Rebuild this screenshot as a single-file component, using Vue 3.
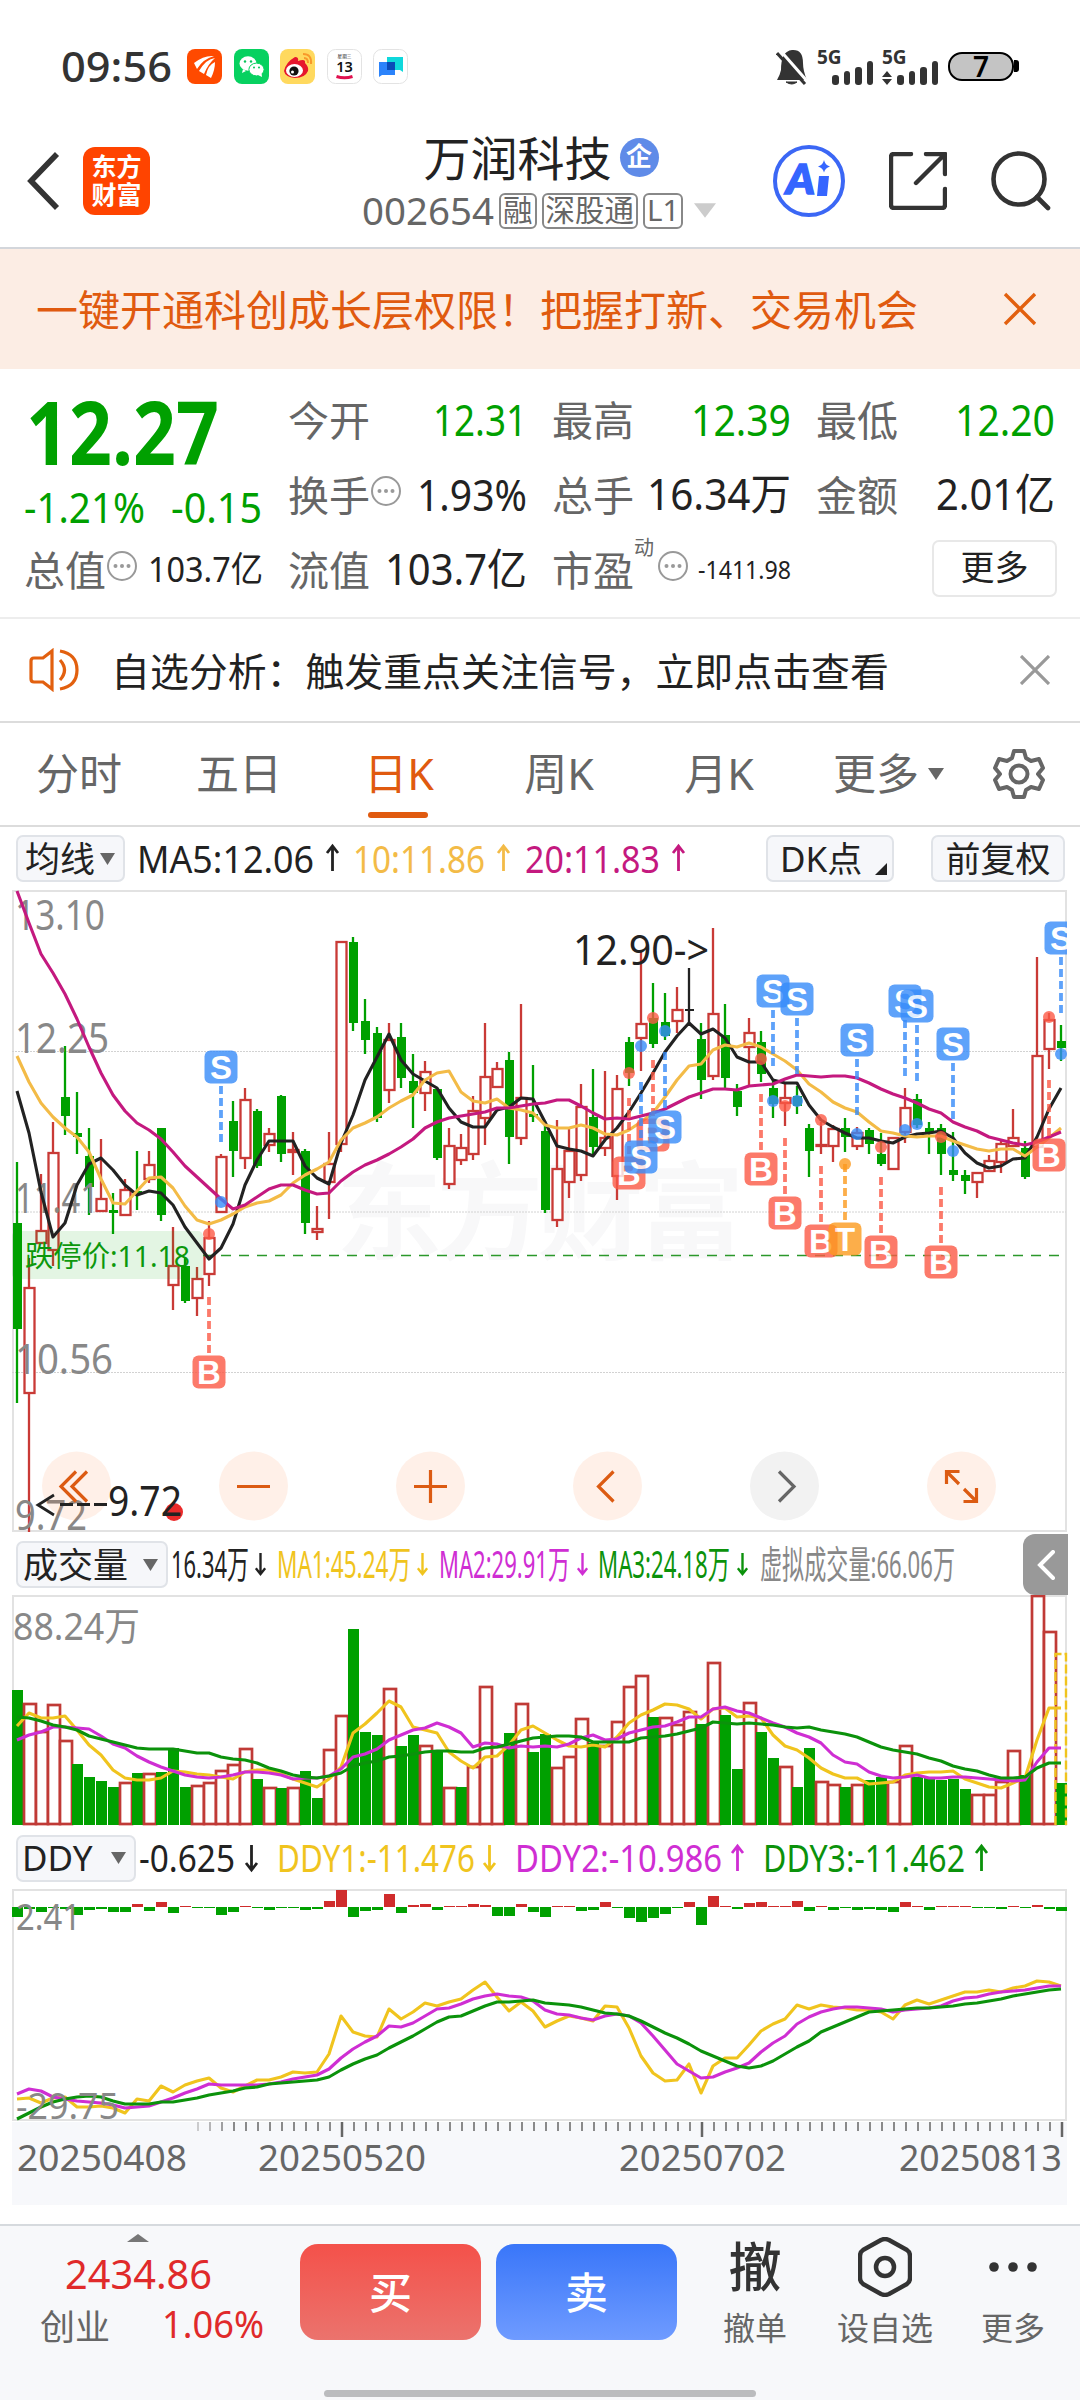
<script setup>

import {h} from "vue"

// Text squeezed or stretched to a known width, centred on its cap height
const Fit = (props) => h("svg", {width: props.w, height: props.s, class: "fit"}, [
    h("text", {
        x: 0,
        y: props.s * 0.86,
        "font-size": props.s,
        textLength: props.w,
        lengthAdjust: "spacingAndGlyphs",
        fill: "currentColor",
    }, props.t),
])
Fit.props = ["t", "w", "s"]

const Arrow = (props) => h("svg", {width: 13, height: 28, viewBox: "0 0 13 28", fill: "none", stroke: "currentColor", "stroke-width": 2.8, class: "fit"}, [
    h("path", {d: props.up ? "M6.5 27V2M1 9l5.5-7L12 9" : "M6.5 1v25M1 19l5.5 7 5.5-7"}),
])
Arrow.props = ["up"]

const tabs = ["分时", "五日", "日K", "周K", "月K"]

const maLegend = [
    {t: "MA5:12.06", w: 177, c: "dark", up: true, gap: 12, ag: 12},
    {t: "10:11.86", w: 132, c: "amber", up: true, gap: 14, ag: 12},
    {t: "20:11.83", w: 135, c: "rose", up: true, gap: 15, ag: 12},
]
const volLegend = [
    {t: "16.34万", w: 78, c: "dark", gap: 3, ag: 6},
    {t: "MA1:45.24万", w: 134, c: "gold", gap: 11, ag: 6},
    {t: "MA2:29.91万", w: 131, c: "violet", gap: 11, ag: 7},
    {t: "MA3:24.18万", w: 132, c: "green2", gap: 10, ag: 7},
    {t: "虚拟成交量:66.06万", w: 195, c: "gray", gap: 12},
]
const ddyLegend = [
    {t: "-0.625", w: 96, c: "dark", gap: 3, ag: 10},
    {t: "DDY1:-11.476", w: 198, c: "gold", gap: 19, ag: 8},
    {t: "DDY2:-10.986", w: 207, c: "violet", up: true, gap: 19, ag: 9},
    {t: "DDY3:-11.462", w: 202, c: "green2", up: true, gap: 19, ag: 10},
]

const px = (i) => 17 + 12 * i
const line = (ys) => ys.map((y, i) => px(i) + "," + y).join(" ")

// [colour, high, body top, body bottom, low]
const candles = [
    ["g", 1162, 1223, 1329, 1403], ["r", 1258, 1287, 1394, 1532], ["r", 1174, 1230, 1244, 1244], ["r", 1122, 1152, 1251, 1266],
    ["g", 1046, 1097, 1116, 1135], ["g", 1092, 1133, 1137, 1154], ["g", 1128, 1156, 1187, 1215], ["r", 1139, 1198, 1212, 1212],
    ["g", 1193, 1210, 1213, 1234], ["r", 1179, 1189, 1216, 1216], ["g", 1151, 1191, 1193, 1210], ["r", 1151, 1164, 1180, 1183],
    ["g", 1128, 1128, 1215, 1221], ["r", 1227, 1265, 1286, 1310], ["g", 1257, 1266, 1301, 1303], ["r", 1267, 1278, 1299, 1316],
    ["r", 1221, 1237, 1275, 1286], ["r", 1154, 1156, 1213, 1213], ["g", 1101, 1121, 1151, 1177], ["r", 1088, 1099, 1159, 1169],
    ["g", 1109, 1111, 1166, 1168], ["r", 1128, 1133, 1146, 1152], ["g", 1095, 1096, 1154, 1162], ["r", 1132, 1149, 1153, 1175],
    ["g", 1149, 1151, 1223, 1234], ["r", 1206, 1228, 1233, 1240], ["r", 1132, 1163, 1183, 1219], ["r", 941, 941, 1145, 1152],
    ["g", 937, 942, 1023, 1031], ["g", 999, 1021, 1040, 1054], ["g", 1027, 1033, 1118, 1122], ["r", 1023, 1039, 1091, 1103],
    ["g", 1023, 1037, 1078, 1088], ["g", 1054, 1081, 1093, 1128], ["r", 1061, 1071, 1094, 1111], ["g", 1089, 1089, 1158, 1160],
    ["r", 1128, 1145, 1185, 1189], ["r", 1134, 1147, 1161, 1165], ["r", 1096, 1110, 1155, 1160], ["r", 1023, 1076, 1119, 1145],
    ["r", 1062, 1068, 1088, 1088], ["g", 1052, 1060, 1137, 1164], ["r", 1004, 1097, 1139, 1145], ["g", 1065, 1114, 1117, 1122],
    ["g", 1121, 1131, 1210, 1213], ["r", 1120, 1168, 1221, 1227], ["r", 1128, 1150, 1183, 1198], ["r", 1084, 1106, 1176, 1181],
    ["g", 1069, 1117, 1147, 1156], ["r", 1071, 1137, 1149, 1156], ["r", 1075, 1088, 1177, 1200], ["g", 1037, 1042, 1073, 1086],
    ["r", 952, 1023, 1039, 1071], ["g", 983, 1018, 1044, 1048], ["g", 993, 1022, 1036, 1040], ["r", 987, 1009, 1022, 1033],
    ["k", 968, 1009, 1011, 1023], ["g", 1023, 1039, 1080, 1099], ["r", 928, 1013, 1077, 1080], ["g", 1004, 1035, 1078, 1088],
    ["g", 1084, 1091, 1107, 1116], ["r", 1018, 1032, 1048, 1087], ["g", 1031, 1042, 1074, 1082], ["g", 1080, 1088, 1104, 1118],
    ["r", 1083, 1097, 1104, 1126], ["g", 1086, 1096, 1106, 1114], ["g", 1124, 1128, 1151, 1177], ["r", 1122, 1144, 1146, 1154],
    ["r", 1125, 1128, 1147, 1162], ["g", 1118, 1128, 1137, 1152], ["r", 1127, 1132, 1147, 1150], ["g", 1128, 1130, 1144, 1154],
    ["g", 1133, 1154, 1164, 1166], ["r", 1137, 1137, 1170, 1170], ["r", 1088, 1107, 1133, 1143], ["g", 1094, 1099, 1125, 1128],
    ["g", 1122, 1128, 1133, 1154], ["g", 1124, 1128, 1154, 1175], ["g", 1132, 1170, 1175, 1181], ["g", 1170, 1175, 1181, 1194],
    ["r", 1172, 1172, 1183, 1198], ["r", 1155, 1160, 1172, 1172], ["r", 1140, 1143, 1163, 1173], ["r", 1109, 1137, 1147, 1147],
    ["g", 1141, 1148, 1177, 1179], ["r", 957, 1055, 1148, 1148], ["r", 1013, 1019, 1050, 1069], ["g", 1025, 1041, 1048, 1061],
]
const strokes = {g: "#00a000", r: "#c93a36", k: "#222"}

const ma5 = [1091, 1133, 1192, 1237, 1223, 1185, 1164, 1158, 1170, 1185, 1195, 1191, 1193, 1205, 1227, 1243, 1259, 1248, 1224, 1185, 1160, 1141, 1141, 1141, 1166, 1178, 1184, 1143, 1115, 1080, 1057, 1034, 1060, 1074, 1081, 1088, 1108, 1122, 1127, 1127, 1110, 1107, 1098, 1099, 1122, 1146, 1149, 1151, 1156, 1140, 1128, 1112, 1093, 1073, 1052, 1036, 1023, 1034, 1029, 1038, 1057, 1062, 1062, 1080, 1083, 1083, 1105, 1120, 1127, 1133, 1138, 1138, 1141, 1143, 1137, 1134, 1133, 1131, 1138, 1153, 1163, 1168, 1166, 1159, 1158, 1137, 1109, 1088]
const ma10 = [1056, 1082, 1103, 1117, 1128, 1137, 1152, 1179, 1203, 1204, 1191, 1178, 1177, 1188, 1206, 1220, 1224, 1220, 1214, 1207, 1203, 1201, 1195, 1183, 1175, 1169, 1162, 1140, 1128, 1123, 1117, 1108, 1101, 1095, 1080, 1073, 1071, 1092, 1101, 1103, 1099, 1108, 1110, 1113, 1125, 1128, 1128, 1125, 1128, 1134, 1135, 1130, 1122, 1113, 1097, 1080, 1066, 1064, 1050, 1045, 1047, 1043, 1047, 1054, 1061, 1070, 1084, 1092, 1102, 1108, 1112, 1122, 1131, 1133, 1136, 1137, 1136, 1136, 1141, 1145, 1149, 1151, 1149, 1149, 1156, 1147, 1138, 1128]
const ma20 = [891, 923, 954, 973, 994, 1019, 1047, 1073, 1095, 1111, 1123, 1130, 1139, 1152, 1166, 1177, 1188, 1199, 1209, 1205, 1197, 1189, 1185, 1185, 1190, 1194, 1193, 1181, 1172, 1165, 1160, 1154, 1147, 1139, 1128, 1122, 1118, 1116, 1114, 1112, 1108, 1108, 1106, 1104, 1103, 1100, 1100, 1106, 1113, 1119, 1118, 1119, 1116, 1113, 1109, 1103, 1097, 1093, 1089, 1089, 1090, 1086, 1085, 1084, 1079, 1075, 1076, 1077, 1076, 1076, 1078, 1083, 1089, 1094, 1098, 1103, 1109, 1113, 1122, 1127, 1131, 1137, 1140, 1143, 1145, 1142, 1137, 1132]

// buy / sell marks: candle, letter, centre y; tail runs down or up from the badge
const marks = [
    {i: 16, l: "B", y: 1372}, {i: 17, l: "S", y: 1067, down: true},
    {i: 51, l: "B", y: 1173}, {i: 53, l: "B", y: 1135}, {i: 52, l: "S", y: 1157}, {i: 54, l: "S", y: 1127},
    {i: 62, l: "B", y: 1169}, {i: 63, l: "S", y: 991, down: true}, {i: 64, l: "B", y: 1213},
    {i: 65, l: "S", y: 999, down: true}, {i: 67, l: "B", y: 1241}, {i: 69, l: "T", y: 1239},
    {i: 70, l: "S", y: 1040, down: true}, {i: 72, l: "B", y: 1252}, {i: 74, l: "S", y: 1001, down: true},
    {i: 75, l: "S", y: 1006, down: true}, {i: 77, l: "B", y: 1262}, {i: 78, l: "S", y: 1044, down: true},
    {i: 86, l: "B", y: 1155}, {i: 87, l: "S", y: 938, down: true},
]
const markColor = {S: "#378cfa", B: "#fc5a46", T: "#fc9a1e"}
const dots = [
    [16, 1234, "B"], [17, 1202, "S"], [51, 1073, "B"], [52, 1046, "S"], [53, 1018, "B"], [54, 1031, "S"], [62, 1059, "B"],
    [63, 1101, "S"], [64, 1106, "B"], [65, 1101, "S"], [67, 1120, "B"], [69, 1164, "T"], [70, 1134, "S"], [72, 1147, "B"],
    [74, 1130, "S"], [75, 1124, "S"], [77, 1137, "B"], [78, 1151, "S"], [86, 1017, "B"], [87, 1054, "S"],
]

const volumes = [1690, 1705, 1733, 1706, 1742, 1764, 1777, 1781, 1787, 1784, 1773, 1775, 1772, 1748, 1787, 1787, 1784, 1772, 1766, 1750, 1779, 1789, 1788, 1789, 1771, 1798, 1751, 1717, 1629, 1732, 1735, 1690, 1746, 1735, 1747, 1751, 1789, 1787, 1768, 1688, 1748, 1733, 1705, 1752, 1734, 1769, 1758, 1720, 1743, 1747, 1723, 1688, 1677, 1717, 1719, 1726, 1713, 1724, 1664, 1715, 1769, 1704, 1732, 1758, 1768, 1787, 1748, 1783, 1786, 1787, 1786, 1780, 1777, 1783, 1747, 1777, 1778, 1780, 1779, 1789, 1796, 1796, 1783, 1752, 1775, 1597, 1633, 1783]
const volColors = "grrrrggggrgrgggrrrrrgrgrggrrgggrggrgrgrrrgrggrrrgrrrrgrrrgrggrggrggrrgrggrrgggggrrrrgrrg"
const vol1 = [1726, 1713, 1718, 1718, 1716, 1730, 1745, 1755, 1770, 1778, 1780, 1780, 1778, 1771, 1772, 1774, 1775, 1777, 1779, 1772, 1770, 1770, 1774, 1779, 1783, 1787, 1779, 1767, 1733, 1724, 1713, 1701, 1707, 1727, 1730, 1733, 1752, 1761, 1768, 1757, 1756, 1745, 1730, 1726, 1733, 1740, 1746, 1747, 1745, 1747, 1737, 1723, 1715, 1710, 1704, 1705, 1709, 1719, 1709, 1708, 1717, 1716, 1718, 1735, 1746, 1750, 1758, 1768, 1774, 1778, 1778, 1784, 1783, 1782, 1775, 1773, 1772, 1772, 1771, 1779, 1783, 1787, 1788, 1783, 1778, 1740, 1708, 1708]
const vol2 = [1740, 1735, 1732, 1727, 1727, 1728, 1729, 1736, 1744, 1748, 1756, 1762, 1767, 1771, 1775, 1777, 1778, 1777, 1775, 1772, 1772, 1773, 1775, 1779, 1778, 1778, 1776, 1769, 1757, 1754, 1749, 1740, 1735, 1730, 1728, 1723, 1727, 1733, 1747, 1743, 1744, 1748, 1746, 1747, 1746, 1747, 1744, 1738, 1735, 1740, 1739, 1733, 1730, 1727, 1726, 1722, 1717, 1717, 1709, 1707, 1711, 1713, 1718, 1723, 1727, 1733, 1737, 1743, 1755, 1762, 1764, 1772, 1776, 1778, 1777, 1775, 1778, 1778, 1777, 1777, 1778, 1779, 1780, 1781, 1780, 1762, 1748, 1748]
const vol3 = [1717, 1718, 1721, 1725, 1727, 1730, 1736, 1739, 1742, 1745, 1748, 1749, 1749, 1749, 1751, 1753, 1753, 1757, 1759, 1760, 1763, 1768, 1771, 1775, 1777, 1778, 1776, 1773, 1766, 1763, 1761, 1757, 1756, 1754, 1752, 1751, 1751, 1752, 1752, 1748, 1747, 1744, 1741, 1738, 1737, 1736, 1736, 1737, 1742, 1742, 1742, 1742, 1738, 1737, 1736, 1734, 1731, 1728, 1722, 1723, 1724, 1723, 1724, 1725, 1727, 1728, 1727, 1730, 1732, 1734, 1737, 1742, 1747, 1750, 1752, 1754, 1758, 1761, 1766, 1769, 1771, 1775, 1778, 1778, 1777, 1768, 1763, 1763]

const ddyBars = [-10, -2, -5, -1, -2, -8, -3, -2, -5, -5, 3, -4, 5, -6, 1, -1, -1, -8, -5, 1, -1, -3, -1, -1, -3, -2, 6, 17, -10, -4, -3, 13, -6, 2, 3, -3, 1, 1, 3, 2, -9, -9, 3, -5, -10, 1, 1, -4, -3, 5, -1, -11, -15, -11, -7, -1, 5, -18, 11, 1, -2, 4, 5, 1, 1, 6, -4, 1, -3, -1, -3, -2, -3, -5, 5, 1, -3, 1, 1, 1, -1, -1, -2, 1, -1, 2, -2, -4]
const ddy1 = [2099, 2098, 2103, 2098, 2097, 2107, 2107, 2106, 2108, 2113, 2099, 2101, 2086, 2092, 2085, 2081, 2078, 2088, 2092, 2086, 2080, 2080, 2077, 2072, 2073, 2072, 2054, 2016, 2032, 2036, 2037, 2009, 2019, 2012, 2003, 2006, 2002, 1999, 1990, 1982, 1997, 2011, 2002, 2011, 2027, 2021, 2016, 2018, 2021, 2006, 2007, 2028, 2056, 2073, 2081, 2080, 2064, 2093, 2066, 2058, 2058, 2045, 2031, 2024, 2019, 2005, 2009, 2005, 2007, 2008, 2010, 2010, 2012, 2019, 2005, 2000, 2004, 2000, 1996, 1992, 1992, 1990, 1992, 1988, 1986, 1981, 1982, 1986]
const ddy2 = [2094, 2089, 2091, 2097, 2099, 2101, 2102, 2103, 2105, 2108, 2107, 2106, 2102, 2098, 2093, 2089, 2084, 2085, 2085, 2085, 2085, 2084, 2082, 2079, 2077, 2075, 2069, 2058, 2049, 2042, 2036, 2026, 2027, 2023, 2016, 2009, 2008, 2004, 1999, 1996, 1994, 1996, 1997, 2001, 2010, 2014, 2015, 2018, 2020, 2016, 2014, 2016, 2023, 2036, 2050, 2064, 2071, 2078, 2077, 2072, 2068, 2063, 2052, 2043, 2036, 2024, 2017, 2012, 2009, 2007, 2007, 2008, 2009, 2012, 2010, 2009, 2008, 2006, 2001, 1998, 1997, 1994, 1992, 1991, 1990, 1988, 1986, 1986]
const ddy3 = [2119, 2113, 2107, 2102, 2099, 2097, 2096, 2097, 2101, 2104, 2104, 2104, 2102, 2102, 2100, 2098, 2095, 2093, 2091, 2088, 2087, 2084, 2083, 2082, 2081, 2080, 2077, 2070, 2064, 2059, 2055, 2048, 2042, 2036, 2029, 2022, 2017, 2016, 2011, 2006, 2002, 2002, 2001, 2000, 2003, 2004, 2005, 2007, 2010, 2013, 2014, 2016, 2021, 2027, 2033, 2038, 2044, 2051, 2056, 2061, 2066, 2068, 2066, 2061, 2054, 2047, 2041, 2032, 2027, 2022, 2017, 2012, 2011, 2010, 2009, 2008, 2008, 2007, 2006, 2004, 2003, 2001, 1999, 1996, 1994, 1992, 1990, 1989]

const scaleLabels = [
    ["13.10", 930, 90], ["12.25", 1053, 94], ["11.41", 1213, 84], ["10.56", 1374, 98], ["9.72", 1530, 72],
]
const dates = [["20250408", 17, 170], ["20250520", 258, 168], ["20250702", 619, 167], ["20250813", 899, 163]]
const ticks = Array.from({length: 73}, (_, k) => k + 15)

const signal = [10, 14, 18, 24]
</script>

<template>
    <div class="page">
        <div class="status">
            <Fit class="clock" t="09:56" :w="111" :s="42" />
            <div class="apps">
                <svg width="35" height="35" viewBox="0 0 35 35"><rect width="35" height="35" rx="8" fill="#ff4a00" /><path d="M7 14Q17 6 27 7Q16 10 10 20zM12 22Q19 10 28 9Q21 15 17 25zM19 26Q21 16 28 13Q28 21 24 29z" fill="#fff" /></svg>
                <svg width="35" height="35" viewBox="0 0 35 35"><rect width="35" height="35" rx="8" fill="#07d160" /><ellipse cx="14" cy="14.500" rx="8.500" ry="7.200" fill="#fff" /><path d="M9 20l-1 4 4-2z" fill="#fff" /><ellipse cx="22.500" cy="20.500" rx="7.600" ry="6.400" fill="#fff" stroke="#07d160" /><path d="M24 26l4 2-.5-4z" fill="#fff" /><g fill="#07c45a"><circle cx="11" cy="12.500" r="1.200" /><circle cx="17" cy="12.500" r="1.200" /><circle cx="20" cy="18.500" r="1" /><circle cx="25" cy="18.500" r="1" /></g></svg>
                <svg width="35" height="35" viewBox="0 0 35 35"><rect width="35" height="35" rx="8" fill="#ffd95e" /><path d="M4 22Q6 13 15 8Q19 8 18 12Q26 9 25 14Q29 18 28 22Q25 29 15 29Q5 28 4 22z" fill="#e6162d" /><ellipse cx="14.500" cy="21.500" rx="8.500" ry="6.500" fill="#fff" /><circle cx="14" cy="22" r="4.600" fill="#111" /><circle cx="12.500" cy="23" r="1.500" fill="#fff" /><path d="M23 5q9 0 8 10M24 9q4 0 4 5" fill="none" stroke="#f8992a" stroke-width="2" /></svg>
                <svg width="35" height="35" viewBox="0 0 35 35"><rect x=".5" y=".5" width="34" height="34" rx="8" fill="#fff" stroke="#e3e3e3" /><text x="17.500" y="8.500" font-size="4.600" text-anchor="middle" fill="#222">星期三</text><text x="17.500" y="23" font-size="14.500" font-weight="600" text-anchor="middle" fill="#111">13</text><path d="M9.500 27.500q8 2.500 16 0" fill="none" stroke="#e0104e" stroke-width="3" /></svg>
                <svg width="35" height="35" viewBox="0 0 35 35"><rect x=".5" y=".5" width="34" height="34" rx="8" fill="#fff" stroke="#e3e3e3" /><path d="M14 8h16v15l-3-2H14z" fill="#0fd8dc" /><path d="M6 13h16v13H9l-3 2z" fill="#2b83fb" /><path d="M14 13h8v8h-8z" fill="#0a4bb8" /></svg>
            </div>
            <div class="system">
                <svg width="32" height="36" viewBox="0 0 32 36"><path d="M1 31q3-5 4-10Q5 2 16 1T27 14q0 8 4 17z" fill="#333" /><path d="M10 33q6 4 11 0z" fill="#333" stroke="#333" /><path d="M3 0l28 32" stroke="#fff" stroke-width="3" /><path d="M1 4l28 31" stroke="#333" stroke-width="3" /></svg>
                <div v-for="n in 2" :key="n" class="cell">
                    <b>5G</b>
                    <svg v-if="n === 2" class="updown" width="10" height="14" viewBox="0 0 10 14"><path d="M5 0l5 6H0zM5 14l5-6H0z" fill="#333" /></svg>
                    <i v-for="s in signal" :key="s" :style="{height: s + 'px'}"></i>
                </div>
                <div class="battery">7</div>
            </div>
        </div>

        <header class="header">
            <div class="left">
                <svg width="34" height="58" viewBox="0 0 34 58"><path d="M31 2L5 29l26 27" fill="none" stroke="#333" stroke-width="5.600" /></svg>
                <div class="brand">东方<br>财富</div>
            </div>
            <div class="title">
                <div class="name">万润科技<span class="corp">企</span></div>
                <div class="code">
                    <Fit t="002654" :w="132" :s="38" />
                    <span class="tag">融</span><span class="tag">深股通</span><span class="tag">L1</span>
                    <svg width="23" height="15" viewBox="0 0 24 15"><path d="M0 0h23L11.500 15z" fill="#ccc" /></svg>
                </div>
            </div>
            <div class="tools">
                <svg width="72" height="72" viewBox="0 0 72 72"><circle cx="36" cy="36" r="34" fill="none" stroke="#3b67f5" stroke-width="4" /><text x="13" y="49" font-size="41" font-weight="900" font-style="italic" fill="#3565ff" stroke="#3565ff" stroke-width="1.500" textLength="29" lengthAdjust="spacingAndGlyphs" class="lato">A</text><path d="M46 31h10l-2 20h-10zM51 15q1 5 6 6.500-5 1.500-6 6-1-4.500-6-6 5-1.500 6-6.500z" fill="#3565ff" /></svg>
                <svg width="58" height="58" viewBox="0 0 58 58" fill="none" stroke="#333" stroke-width="4.400" stroke-linecap="round" stroke-linejoin="round"><path d="M22 2H5q-3 0-3 3v48q0 3 3 3h48q3 0 3-3V37M37 2h19v20M55 3L27 31" /></svg>
                <svg width="60" height="60" viewBox="0 0 60 60" fill="none" stroke="#333" stroke-width="4.600" stroke-linecap="round"><circle cx="28" cy="28" r="25.500" /><path d="M46 46l11 11" /></svg>
            </div>
        </header>

        <div class="banner">
            <span>一键开通科创成长层权限！把握打新、交易机会</span>
            <svg width="34" height="34" viewBox="0 0 34 34"><path d="M2 2l30 30M32 2L2 32" stroke="#e2600f" stroke-width="3.400" /></svg>
        </div>

        <section class="quotes">
            <div class="price">
                <Fit class="green bold last" t="12.27" :w="193" :s="88" />
                <div class="change green"><Fit t="-1.21%" :w="121" :s="41" /><Fit t="-0.15" :w="91" :s="41" /></div>
            </div>
            <div class="quote"><label>今开</label><Fit class="green" t="12.31" :w="94" :s="44" /></div>
            <div class="quote"><label>最高</label><Fit class="green" t="12.39" :w="100" :s="44" /></div>
            <div class="quote"><label>最低</label><Fit class="green" t="12.20" :w="100" :s="44" /></div>
            <div class="quote"><label>换手<svg class="hint" width="30" height="30" viewBox="0 0 30 30"><circle cx="15" cy="15" r="14" fill="none" stroke="#999" stroke-width="2" /><g fill="#999"><circle cx="8.500" cy="15" r="2" /><circle cx="15" cy="15" r="2" /><circle cx="21.500" cy="15" r="2" /></g></svg></label><Fit t="1.93%" :w="110" :s="44" /></div>
            <div class="quote"><label>总手</label><Fit t="16.34万" :w="144" :s="43" /></div>
            <div class="quote"><label>金额</label><Fit t="2.01亿" :w="119" :s="43" /></div>
            <div class="quote"><label>总值<svg class="hint" width="30" height="30" viewBox="0 0 30 30"><circle cx="15" cy="15" r="14" fill="none" stroke="#999" stroke-width="2" /><g fill="#999"><circle cx="8.500" cy="15" r="2" /><circle cx="15" cy="15" r="2" /><circle cx="21.500" cy="15" r="2" /></g></svg></label><Fit t="103.7亿" :w="115" :s="35" /></div>
            <div class="quote"><label>流值</label><Fit t="103.7亿" :w="142" :s="43" /></div>
            <div class="quote pe"><label>市盈<sup>动</sup><svg class="hint" width="30" height="30" viewBox="0 0 30 30"><circle cx="15" cy="15" r="14" fill="none" stroke="#999" stroke-width="2" /><g fill="#999"><circle cx="8.500" cy="15" r="2" /><circle cx="15" cy="15" r="2" /><circle cx="21.500" cy="15" r="2" /></g></svg></label><Fit t="-1411.98" :w="93" :s="26" /></div>
            <div class="quote"><button class="more">更多</button></div>
        </section>

        <div class="notice">
            <svg width="52" height="44" viewBox="0 0 52 44" fill="none" stroke="#e2600f" stroke-width="3.200"><path d="M23 3v38l-9-7H5q-3 0-3-3V13q0-3 3-3h9zM31 12q9 10 0 20M31 3q17 3 17 19T31 41" /></svg>
            <span>自选分析：触发重点关注信号，立即点击查看</span>
            <svg width="30" height="30" viewBox="0 0 30 30"><path d="M1 1l28 28M29 1L1 29" stroke="#999" stroke-width="3.200" /></svg>
        </div>

        <nav class="tabs">
            <a v-for="tab in tabs" :key="tab" :class="{on: tab === '日K'}">{{ tab }}</a>
            <a class="rest">更多<svg width="16" height="12" viewBox="0 0 16 12"><path d="M0 0h16L8 12z" fill="#666" /></svg></a>
            <svg class="gear" width="52" height="52" viewBox="0 0 52 52" fill="none" stroke="#666" stroke-width="4" stroke-linejoin="round"><path d="M21 3h10l2 7 5 3 8-2 4 9-5 6 5 6-4 9-8-2-5 3-2 7H21l-2-7-5-3-8 2-4-9 5-6-5-6 4-9 8 2 5-3z" /><circle cx="26" cy="26" r="8.500" /></svg>
        </nav>

        <div class="legend ma">
            <span class="pill p1">均线<svg width="15" height="12" viewBox="0 0 15 12"><path d="M0 0h15L7.500 12z" fill="#666" /></svg></span>
            <span v-for="m in maLegend" :key="m.t" :class="['entry', m.c]" :style="{marginLeft: m.gap + 'px', gap: m.ag + 'px'}"><Fit :t="m.t" :w="m.w" :s="39" /><Arrow :up="m.up" /></span>
            <span class="pill dk">DK点<svg width="12" height="12" viewBox="0 0 12 12"><path d="M12 0v12H0z" fill="#222" /></svg></span>
            <span class="pill fq">前复权</span>
        </div>

        <svg class="panel" width="1080" height="644" viewBox="0 890 1080 644">
            <path d="M13 890V1531H1066V891H12" fill="none" stroke="#e2e2e2" stroke-width="2" />
            <text x="336" y="1251" font-size="106" font-weight="700" fill="#f8f8f9" textLength="408">东方财富</text>
            <path d="M12 1051.500H1066M12 1212H1066M12 1372.500H1066" stroke="#d2d2d2" stroke-width="1" stroke-dasharray="2 1" />
            <g v-for="(c, i) in candles" :key="i" :stroke="strokes[c[0]]" stroke-width="2.300">
                <path :d="`M${px(i)} ${c[1]}V${c[2]}M${px(i)} ${c[3]}V${c[4]}`" />
                <rect v-if="c[0] === 'r'" :x="px(i) - 4.500" :y="c[2] + 1" width="10" :height="Math.max(c[3] - c[2] - 2, 1)" fill="#fff" />
                <rect v-else :x="px(i) - 4" :y="c[2]" width="9" :height="c[3] - c[2]" :fill="strokes[c[0]]" stroke="none" />
            </g>
            <g fill="#888" font-size="41">
                <text v-for="s in scaleLabels" :key="s[0]" x="15" :y="s[1]" :textLength="s[2]" lengthAdjust="spacingAndGlyphs">{{ s[0] }}</text>
            </g>
            <rect x="12" y="1231" width="191" height="48" rx="5" fill="#00a000" opacity=".11" />
            <text x="25" y="1267" font-size="29" fill="#0c980c" textLength="165" lengthAdjust="spacingAndGlyphs">跌停价:11.18</text>
            <path d="M203 1255.500H1066" stroke="#2b982b" stroke-width="1.300" stroke-dasharray="10 8" />
            <g fill="none" stroke-width="3.100" stroke-linejoin="round">
                <polyline :points="line(ma5)" stroke="#222" />
                <polyline :points="line(ma10)" stroke="#f3bb47" />
                <polyline :points="line(ma20)" stroke="#c4197f" />
            </g>
            <circle v-for="d in dots" :key="d[0]" :cx="px(d[0])" :cy="d[1]" r="6" :fill="markColor[d[2]]" opacity=".8" />
            <g v-for="m in marks" :key="m.i" opacity=".8">
                <path :d="m.down ? `M${px(m.i)} ${m.y + 19}v56` : `M${px(m.i)} ${m.y - 75}v56`" :stroke="markColor[m.l]" stroke-width="3.800" stroke-dasharray="8 4" />
                <rect :x="px(m.i) - 16.500" :y="m.y - 16.500" width="33" height="33" rx="6" :fill="markColor[m.l]" />
                <text :x="px(m.i)" :y="m.y + 12" font-size="33" class="mark" text-anchor="middle" fill="#fff">{{ m.l }}</text>
            </g>
            <rect x="1067" y="900" width="13" height="300" fill="#fff" />
            <text x="573" y="965" font-size="41" fill="#222" textLength="136" lengthAdjust="spacingAndGlyphs">12.90-&gt;</text>
            <circle cx="174" cy="1512" r="9" fill="#eb2a2a" />
            <g fill="#ff6a1f" fill-opacity=".1"><circle cx="76.500" cy="1486" r="34.500" /><circle cx="253.500" cy="1486" r="34.500" /><circle cx="430.500" cy="1486" r="34.500" /><circle cx="607.500" cy="1486" r="34.500" /><circle cx="961.500" cy="1486" r="34.500" /></g>
            <circle cx="784.500" cy="1486" r="34.500" fill="#f2f2f2" />
            <g fill="none" stroke="#dc5b12" stroke-width="3.200">
                <path d="M76 1471.500l-15 15 15 15M87 1471.500l-15 15 15 15M237 1486.500h33M414 1486.500h33M430.500 1470v33M613.500 1471.500l-15 15 15 15" />
                <path d="M946.500 1484v-12.500h13M947 1472l12 12M976.500 1488v13.500h-13M976 1501l-12-12" />
                <path d="M779 1471.500l15 15-15 15" stroke="#666" />
            </g>
            <path d="M54 1495l-16 10 16 10M60 1504.500h13M77 1504.500h13M94 1504.500h13" fill="none" stroke="#222" stroke-width="2.800" />
            <text x="108" y="1516" font-size="41" fill="#222" textLength="74" lengthAdjust="spacingAndGlyphs">9.72</text>
        </svg>

        <div class="legend vol">
            <span class="pill p2">成交量<svg width="15" height="12" viewBox="0 0 15 12"><path d="M0 0h15L7.500 12z" fill="#666" /></svg></span>
            <span v-for="m in volLegend" :key="m.t" :class="['entry', m.c]" :style="{marginLeft: m.gap + 'px', gap: m.ag + 'px'}"><Fit :t="m.t" :w="m.w" :s="38" /><Arrow v-if="m.ag" :up="m.up" class="slim" /></span>
            <span class="drawer"><svg width="18" height="30" viewBox="0 0 18 30"><path d="M16 2L3 15l13 13" fill="none" stroke="#fff" stroke-width="4" stroke-linecap="round" /></svg></span>
        </div>

        <svg class="panel" width="1080" height="232" viewBox="0 1595 1080 232">
            <path d="M13 1596V1825M12 1596H1066V1826" fill="none" stroke="#e2e2e2" stroke-width="2" />
            <text x="13" y="1640" font-size="39" fill="#888" textLength="127" lengthAdjust="spacingAndGlyphs">88.24万</text>
            <template v-for="(y, i) in volumes" :key="i">
                <rect v-if="volColors[i] === 'r'" :x="px(i) - 5" :y="y - 1" width="12" :height="1825 - y" fill="#fff" stroke="#c03a36" stroke-width="2.700" />
                <rect v-else :x="px(i) - 5" :y="y" width="11" :height="1825 - y" fill="#00a000" />
            </template>
            <path d="M1055.500 1825V1654H1066V1825" fill="none" stroke="#f0c41e" stroke-width="2.400" stroke-dasharray="9 3" />
            <g fill="none" stroke-width="3.100" stroke-linejoin="round">
                <polyline :points="line(vol1)" stroke="#f0c41e" />
                <polyline :points="line(vol2)" stroke="#cf2ed3" />
                <polyline :points="line(vol3)" stroke="#0b920b" />
            </g>
        </svg>

        <div class="legend ddy">
            <span class="pill p3">DDY<svg width="15" height="12" viewBox="0 0 15 12"><path d="M0 0h15L7.500 12z" fill="#666" /></svg></span>
            <span v-for="m in ddyLegend" :key="m.t" :class="['entry', m.c]" :style="{marginLeft: m.gap + 'px', gap: m.ag + 'px'}"><Fit :t="m.t" :w="m.w" :s="39" /><Arrow :up="m.up" /></span>
        </div>

        <svg class="panel" width="1080" height="316" viewBox="0 1889 1080 316">
            <rect x="12" y="2122" width="1055" height="83" fill="#f7f8fb" />
            <path d="M12 1890H1066V2120H13V1890" fill="none" stroke="#e2e2e2" stroke-width="2" />
            <rect v-for="(b, i) in ddyBars" :key="i" :x="px(i) - 5" :y="b > 0 ? 1907 - b : 1907" width="11" :height="Math.abs(b)" :fill="b > 0 ? '#d02c2c' : '#00a000'" />
            <g fill="none" stroke-width="3.100" stroke-linejoin="round">
                <polyline :points="line(ddy1)" stroke="#f0c41e" />
                <polyline :points="line(ddy2)" stroke="#cf2ed3" />
                <polyline :points="line(ddy3)" stroke="#0b920b" />
            </g>
            <text x="16" y="1930" font-size="37" fill="#888" textLength="65" lengthAdjust="spacingAndGlyphs">2.41</text>
            <text x="16" y="2119" font-size="37" fill="#888" textLength="103" lengthAdjust="spacingAndGlyphs">-29.75</text>
            <path v-for="i in ticks" :key="i" :d="`M${px(i) + 1} 2122V${i % 30 === 27 ? 2137 : 2131}`" stroke="#666" :stroke-width="i % 30 === 27 ? 2.500 : 1.500" :opacity="i < 18 ? (i - 13) / 5 : 1" />
            <g fill="#666" font-size="37">
                <text v-for="d in dates" :key="d[0]" :x="d[1]" y="2171" :textLength="d[2]" lengthAdjust="spacingAndGlyphs">{{ d[0] }}</text>
            </g>
        </svg>

        <footer class="footer">
            <div class="index">
                <svg width="22" height="8" viewBox="0 0 22 8"><path d="M11 0l11 8H0z" fill="#777" /></svg>
                <Fit class="red" t="2434.86" :w="147" :s="40" />
                <div class="board"><span>创业</span><Fit class="red" t="1.06%" :w="102" :s="38" /></div>
            </div>
            <button class="trade buy">买</button>
            <button class="trade sell">卖</button>
            <div class="action a1"><div class="icon"><b>撤</b></div>撤单</div>
            <div class="action a2"><div class="icon"><svg width="54" height="60" viewBox="0 0 54 60" fill="none" stroke="#333" stroke-width="4.400" stroke-linejoin="round"><path d="M23 3q4-2 8 0l18 10q3 2 3 6v22q0 4-3 6L31 57q-4 2-8 0L5 47q-3-2-3-6V19q0-4 3-6z" /><circle cx="27" cy="30" r="9" stroke-width="4.500" /></svg></div>设自选</div>
            <div class="action a3"><div class="icon"><svg width="48" height="10" viewBox="0 0 48 10" fill="#333"><circle cx="5" cy="5" r="4.800" /><circle cx="24" cy="5" r="4.800" /><circle cx="43" cy="5" r="4.800" /></svg></div>更多</div>
        </footer>
        <div class="home"><i></i></div>
    </div>
</template>

<style>
body {
    background: #fff;
}
</style>

<style scoped>

.page {
    width: 1080px;
    height: 2400px;
    display: flex;
    flex-direction: column;
    overflow: hidden;
    background: #fff;
    color: #222;
    font-family: "Noto Sans", "Noto Sans CJK SC", sans-serif;
}

.page > * {
    flex: none;
    box-sizing: border-box;
}

svg {
    display: block;
    flex: none;
}

.fit {
    overflow: visible;
}

.bold {
    font-weight: 700;
}

.green { color: #00a000; }
.green2 { color: #0b920b; }
.red { color: #e02a2a; }
.dark { color: #222; }
.amber { color: #f3bb47; }
.gold { color: #f0c41e; }
.rose { color: #c4197f; }
.violet { color: #cf2ed3; }
.gray { color: #888; }

.status {
    height: 115px;
    padding: 18px 62px 0 61px;
    display: flex;
    align-items: center;
    color: #333;
}

.clock {
    font-weight: 500;
}

.apps {
    display: flex;
    gap: 11.5px;
    margin-left: 15px;
}

.system {
    margin-left: auto;
    display: flex;
    align-items: center;
}

.cell {
    position: relative;
    height: 36px;
    width: 56px;
    margin-left: 9px;
    display: flex;
    align-items: flex-end;
    justify-content: flex-end;
    gap: 5px;
}

.cell i {
    width: 6.5px;
    border-radius: 3px;
    background: #333;
}

.cell b {
    position: absolute;
    left: 0;
    top: 0;
    font-size: 19px;
    line-height: 16px;
}

.battery {
    position: relative;
    box-sizing: border-box;
    width: 66px;
    height: 29px;
    margin: 0 4px 0 10px;
    border: 2.5px solid #000;
    border-radius: 14px;
    background: #c4c4c4;
    color: #000;
    font: 600 28px/24px "Noto Sans", sans-serif;
    text-align: center;
}

.battery::after {
    content: "";
    position: absolute;
    right: -7px;
    top: 6px;
    width: 5px;
    height: 12px;
    border-radius: 0 3px 3px 0;
    background: #000;
}

.header {
    height: 134px;
    border-bottom: 2px solid #d3d6db;
    display: grid;
    grid-template-columns: 362px 354px 1fr;
    align-items: center;
}

.left {
    display: flex;
    align-items: center;
    padding-left: 26px;
}

.brand {
    width: 67px;
    height: 68px;
    margin-left: 23px;
    box-sizing: border-box;
    padding-top: 5px;
    border-radius: 12px;
    background: #ff4400;
    color: #fff;
    font-weight: 700;
    font-size: 25px;
    line-height: 28px;
    text-align: center;
}

.name {
    display: flex;
    align-items: center;
    justify-content: center;
    font-size: 47px;
    line-height: 56px;
    padding-left: 4px;
}

.corp {
    width: 39px;
    height: 39px;
    margin-left: 8px;
    border-radius: 50%;
    background: #5f8be8;
    color: #fff;
    font-size: 26px;
    font-weight: 700;
    line-height: 37px;
    text-align: center;
}

.code {
    display: flex;
    align-items: center;
    height: 44px;
    margin-top: 3px;
    color: #666;
    white-space: nowrap;
}

.tag {
    margin-left: 5px;
    padding: 0 2px;
    border: 2px solid #888;
    border-radius: 6px;
    font-size: 29.5px;
    line-height: 30px;
    height: 32px;
    flex: none;
}

.code svg:last-child {
    margin-left: 11px;
}

.tools {
    display: flex;
    align-items: center;
    padding-left: 57px;
    gap: 44px;
}

.lato {
    font-family: Lato, sans-serif;
}

.banner {
    height: 120px;
    padding: 0 43px 0 36px;
    display: flex;
    align-items: center;
    justify-content: space-between;
    background: #fcede4;
    color: #e05a0f;
    font-size: 42px;
}

.banner span {
    padding-bottom: 3px;
}

.quotes {
    height: 250px;
    padding: 13px 26px 0;
    border-bottom: 2px solid #ededed;
    display: grid;
    grid-template-columns: repeat(4, 236px);
    grid-template-rows: repeat(3, 75px);
    column-gap: 28px;
}

.price {
    grid-row: span 2;
}

.last {
    margin: 7px 0 6px;
}

.change {
    height: 50px;
    margin-left: -2px;
    display: flex;
    align-items: center;
    justify-content: space-between;
}

.quote {
    display: flex;
    align-items: center;
    justify-content: space-between;
}

.quote label {
    display: flex;
    align-items: center;
    margin-left: -2px;
    font-size: 41px;
    line-height: 50px;
    color: #666;
}

.quote .fit {
    margin-right: -1px;
}

.hint {
    margin: -8px 0 0 1px;
}

.pe {
    position: relative;
}

.pe sup {
    width: 20px;
    margin-top: -44px;
    font-size: 20px;
    line-height: 24px;
}

.pe .hint {
    margin-left: 4px;
}

.more {
    box-sizing: border-box;
    width: 125px;
    height: 57px;
    margin-left: auto;
    margin-right: -3px;
    margin-bottom: 3px;
    padding: 0;
    border: 2px solid #e8e8e8;
    border-radius: 7px;
    background: #fff;
    color: #222;
    font: 34px/48px "Noto Sans CJK SC", sans-serif;
}

.more {
    padding-bottom: 4px;
}

.notice {
    height: 104px;
    padding: 0 30px 0 29px;
    border-bottom: 2px solid #dcdcdc;
    display: flex;
    align-items: center;
    font-size: 38.9px;
}

.notice span {
    margin-left: 30px;
    padding-bottom: 3px;
}

.notice svg:last-child {
    margin-left: auto;
}

.tabs {
    height: 104px;
    border-bottom: 2px solid #dcdcdc;
    display: flex;
    align-items: center;
    color: #666;
    font-size: 43px;
}

.tabs a {
    position: relative;
    width: 160px;
    line-height: 102px;
    text-align: center;
}

.tabs a:first-child {
    margin-left: -1px;
}

.tabs .on {
    color: #e05a0f;
}

.tabs .on::after {
    content: "";
    position: absolute;
    left: 49px;
    bottom: 7px;
    width: 60px;
    height: 6px;
    border-radius: 3px;
    background: #e05a0f;
}

.tabs .rest {
    width: 120px;
    display: flex;
    align-items: center;
    gap: 9px;
    padding-left: 34px;
}

.gear {
    margin-left: auto;
    margin-right: 35px;
}

.legend {
    display: flex;
    align-items: center;
    padding-left: 16px;
}

.ma {
    height: 63px;
    padding-right: 15px;
}

.vol {
    height: 61px;
}

.ddy {
    height: 62px;
}

.entry {
    display: flex;
    align-items: center;
    margin-top: -1px;
}

.slim {
    width: 11px;
}

.pill {
    box-sizing: border-box;
    height: 47px;
    display: flex;
    align-items: center;
    justify-content: space-between;
    border: 2px solid #e0e3e8;
    border-radius: 7px;
    background: #f6f7fa;
    color: #222;
    font-size: 35px;
    line-height: 42px;
    flex: none;
}

.p1 {
    width: 109px;
    padding: 0 8px 0 7px;
}

.p2 {
    width: 152px;
    padding: 0 8px 0 5px;
}

.p3 {
    width: 120px;
    padding: 0 8px 0 4px;
}

.dk {
    width: 128px;
    margin-left: auto;
    padding: 0 5px 0 12px;
}

.dk svg {
    margin-top: 21px;
}

.fq {
    width: 134px;
    margin-left: 37px;
    justify-content: center;
}

.drawer {
    width: 45px;
    height: 61px;
    margin-left: auto;
    margin-right: 12px;
    border-radius: 12px 0 0 12px;
    background: #999;
    display: flex;
    align-items: center;
    justify-content: center;
}

.mark {
    font-family: "Liberation Sans", sans-serif;
    font-weight: 700;
}

.footer {
    height: 150px;
    margin-top: 19px;
    padding-right: 34px;
    border-top: 2px solid #d6dade;
    display: flex;
    align-items: flex-start;
    background: #f7f8fa;
}

.index {
    width: 276px;
    margin-right: 24px;
    padding-top: 8px;
    display: flex;
    flex-direction: column;
    align-items: center;
}

.index > .red {
    margin-top: 13px;
}

.board {
    height: 50px;
    margin-top: 4px;
    width: 224px;
    margin-left: 28px;
    display: flex;
    align-items: center;
    justify-content: space-between;
    color: #666;
    font-size: 35px;
}

.trade {
    width: 181px;
    height: 96px;
    margin: 18px 15px 0 0;
    padding: 0 0 4px;
    border: 0;
    border-radius: 18px;
    color: #fff;
    font: 500 43px/92px "Noto Sans CJK SC", sans-serif;
}

.buy {
    background: linear-gradient(#f4514a, #eb736d);
}

.sell {
    background: linear-gradient(#3976f9, #6f9bff);
}

.action {
    text-align: center;
    font-size: 32px;
    line-height: 44px;
    color: #666;
    white-space: nowrap;
}

.icon {
    height: 64px;
    margin: 9px 0 7px;
    display: flex;
    align-items: center;
    justify-content: center;
    color: #333;
}

.icon b {
    font-size: 53px;
    font-weight: 500;
}

.a1 {
    width: 66px;
    margin-left: 30px;
}

.a2 {
    width: 98px;
    margin-left: 48px;
}

.a3 {
    width: 66px;
    margin-left: auto;
}

.home {
    flex: 1 1 auto !important;
    background: #f7f8fa;
    display: flex;
    justify-content: center;
    align-items: flex-end;
    padding-bottom: 3px;
}

.home i {
    width: 432px;
    height: 7px;
    border-radius: 4px;
    background: #bbbcbe;
}

.updown {
    position: absolute;
    left: 0;
    bottom: 0;
}

</style>
